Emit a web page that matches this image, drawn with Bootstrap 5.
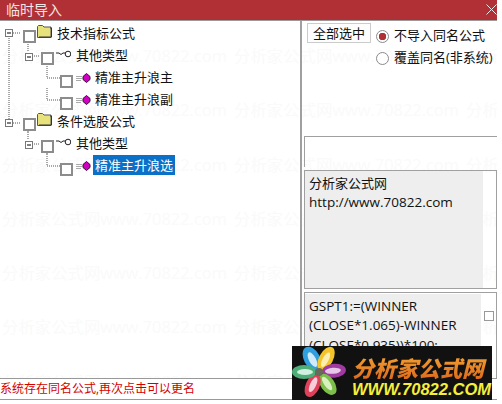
<!DOCTYPE html>
<html lang="zh-CN">
<head>
  <meta charset="UTF-8" />
  <title>临时导入</title>
  <link href="https://cdn.jsdelivr.net/npm/bootstrap@5.3.0/dist/css/bootstrap.min.css" rel="stylesheet"/>
  <style>
    body {
      background: #fff;
      color: #111;
      font-family: "Open Sans", "Noto Sans CJK SC", sans-serif;
      font-size: 13px;
      overflow: hidden;
    }
    .app-win { position: relative; width: 497px; height: 400px; }
    .title-bar {
      height: 21px;
      background: #b13035;
      border-bottom: 1px solid #999;
      color: #f4e6e6;
      font-size: 14px;
      line-height: 19px;
      padding-left: 6px;
    }
    .watermark {
      position: absolute;
      top: 29px; left: 2px; right: 0; bottom: 0;
      overflow: hidden;
      color: #fafafa;
      font-size: 16.4px;
      line-height: 54.3px;
      white-space: nowrap;
      word-spacing: 3px;
    }
    .main-area { position: relative; height: 357px; }
    .tree-pane { width: 302px; border-right: 2px solid #a0a0a0; padding-top: 1px; }
    .tree-row { height: 22px; }
    .tree-lines { flex: none; display: block; }
    .tree-lines path { fill: none; stroke: #555; stroke-dasharray: 1 1; }
    .tree-label { line-height: 20px; padding: 0 2px; margin-left: -2px; margin-top: 1px; height: 20px; }
    .tree-label.is-selected { background: #0a70c8; color: #fff; }
    .side-pane { width: 195px; }
    .side-top { height: 115px; padding: 2px 0 0 5px; }
    .all-btn {
      width: 64px; height: 20px; padding: 0;
      font-size: 13px; line-height: 18px;
      border: 1px solid #ccc; border-radius: 0;
      background: #fdfdfd; color: #111;
    }
    .radio-col { padding: 2px 0 0 5px; }
    .radio-row { min-height: 0; height: 22px; padding: 0; margin: 0; gap: 5px; white-space: nowrap; }
    .radio-row .form-check-input {
      float: none; margin: 0; width: 13px; height: 13px;
      border: 1px solid #8a8a8a; box-shadow: none;
    }
    .radio-row .form-check-input:checked {
      background-color: #fff;
      background-image: radial-gradient(circle, #b13035 0 3.5px, transparent 4px);
      border-color: #8a8a8a;
    }
    .radio-row .form-check-label { opacity: 1; }
    .name-box { height: 31px; margin: 0 0 3px 2px; border-top: 1px solid #a0a0a0; border-left: 1px solid #a0a0a0; }
    .text-box {
      margin-left: 2px;
      border: 1px solid #a0a0a0;
      line-height: 19.4px;
    }
    .desc-box { height: 119px; margin-bottom: 3px; }
    .code-box { flex-grow: 1; border-bottom: 0; }
    .text-fill { background: #eee; padding: 3px 0 0 4px; font-size: 13.5px; }
    .cn-line { font-size: 13px; }
    .desc-box .text-fill { width: 178px; }
    .code-box .text-fill { width: 176px; margin-top: 1px; overflow: hidden; }
    .line-check { width: 10px; height: 10px; border: 1px solid #999; margin: 18px 0 0 3px; flex: none; }
    .status-bar {
      height: 22px;
      border-top: 1px solid #999;
      border-bottom: 1px solid #999;
      color: #d40000;
      font-size: 12px;
      line-height: 20px;
      white-space: nowrap;
      background: #fff;
      position: relative;
    }
    .logo-block {
      position: absolute;
      left: 292px; top: 346px;
      width: 200px; height: 55px;
      background: #111;
      padding-left: 60px;
      overflow: hidden;
    }
    .logo-flower { position: absolute; left: 0; top: 0; }
    .logo-name {
      font-family: "Noto Sans CJK SC", sans-serif;
      font-size: 22px;
      font-weight: 900;
      font-style: italic;
      line-height: 30px;
      margin-top: 6px;
      white-space: nowrap;
      background: linear-gradient(#f7a834, #d9651c);
      -webkit-background-clip: text;
      background-clip: text;
      color: transparent;
    }
    .logo-url {
      font-family: "Liberation Sans", sans-serif;
      font-size: 16.5px;
      font-weight: 700;
      font-style: italic;
      line-height: 14px;
      color: #f7ee3a;
      white-space: nowrap;
    }
  </style>
</head>
<body>
  <svg width="0" height="0" class="position-absolute">
    <defs>
      <symbol id="chk" viewBox="0 0 13 13"><rect x="1" y="1" width="11" height="11" fill="#fff" stroke="#8c8c8c" stroke-width="2"/></symbol>
      <symbol id="exp" viewBox="0 0 8 8"><rect x=".5" y=".5" width="7" height="7" fill="#fff" stroke="#777"/><path d="M2 4h4" stroke="#000"/></symbol>
      <symbol id="fld" viewBox="0 0 15 13">
        <path d="M.5 12.500V1.500l1-1h4l1.500 1.500h7v10.500z" fill="#e8e27c" stroke="#555"/>
        <path d="M13 3h1.500v9H2" fill="none" stroke="#333"/>
      </symbol>
      <symbol id="key" viewBox="0 0 15 8">
        <path d="M0 3h3l2 1.500L7 3h3" fill="none" stroke="#222"/>
        <circle cx="12" cy="4" r="2.800" fill="#fff" stroke="#222"/>
      </symbol>
      <symbol id="gem" viewBox="0 0 15 10">
        <path d="M0 3.500h6M0 5.500h6M0 7.500h5" stroke="#aaa" fill="none"/>
        <path d="M10.500 .5l3.500 3v3l-3.500 3-3.500-3v-3z" fill="#d000c0" stroke="#301030"/>
      </symbol>
    </defs>
  </svg>

  <div class="app-win">
    <div class="watermark">
      <div>分析家公式网www.70822.com 分析家公式网www.70822.com 分析家公式网</div>
      <div>分析家公式网www.70822.com 分析家公式网www.70822.com 分析家公式网</div>
      <div>分析家公式网www.70822.com 分析家公式网www.70822.com 分析家公式网</div>
      <div>分析家公式网www.70822.com 分析家公式网www.70822.com 分析家公式网</div>
      <div>分析家公式网www.70822.com 分析家公式网www.70822.com 分析家公式网</div>
      <div>分析家公式网www.70822.com 分析家公式网www.70822.com 分析家公式网</div>
      <div>分析家公式网www.70822.com 分析家公式网www.70822.com 分析家公式网</div>
    </div>

    <div class="title-bar d-flex justify-content-between position-relative">
      <span>临时导入</span>
      <svg width="11" height="11" class="mt-1 me-0" viewBox="0 0 11 11"><path d="M.5.5l10 10M10.500.5l-10 10" stroke="#f4e6e6" fill="none"/></svg>
    </div>

    <div class="main-area d-flex">
      <div class="tree-pane">
        <div class="tree-row d-flex">
          <svg class="tree-lines" width="57" height="22">
            <path d="M9 14V22M13 11H20"/>
            <use href="#exp" x="5" y="7" width="8" height="8"/>
            <use href="#chk" x="23" y="8" width="13" height="13"/>
            <use href="#fld" x="37" y="3" width="15" height="13"/>
          </svg>
          <span class="tree-label">技术指标公式</span>
        </div>
        <div class="tree-row d-flex">
          <svg class="tree-lines" width="76" height="22">
            <path d="M9 0V22M28 0V8M32 12H40"/>
            <use href="#exp" x="25" y="9" width="8" height="8"/>
            <use href="#chk" x="41" y="8" width="13" height="13"/>
            <use href="#key" x="56" y="6" width="15" height="8"/>
          </svg>
          <span class="tree-label">其他类型</span>
        </div>
        <div class="tree-row d-flex">
          <svg class="tree-lines" width="95" height="22">
            <path d="M9 0V22M47 0V12H60"/>
            <use href="#chk" x="60" y="9" width="13" height="13"/>
            <use href="#gem" x="76" y="7" width="15" height="10"/>
          </svg>
          <span class="tree-label">精准主升浪主</span>
        </div>
        <div class="tree-row d-flex">
          <svg class="tree-lines" width="95" height="22">
            <path d="M9 0V22M47 0V12H60"/>
            <use href="#chk" x="60" y="9" width="13" height="13"/>
            <use href="#gem" x="76" y="7" width="15" height="10"/>
          </svg>
          <span class="tree-label">精准主升浪副</span>
        </div>
        <div class="tree-row d-flex">
          <svg class="tree-lines" width="57" height="22">
            <path d="M9 0V9M13 13H20M28 21V22"/>
            <use href="#exp" x="5" y="9" width="8" height="8"/>
            <use href="#chk" x="23" y="8" width="13" height="13"/>
            <use href="#fld" x="37" y="3" width="15" height="13"/>
          </svg>
          <span class="tree-label">条件选股公式</span>
        </div>
        <div class="tree-row d-flex">
          <svg class="tree-lines" width="76" height="22">
            <path d="M28 0V8M32 12H40M47 21V22"/>
            <use href="#exp" x="25" y="9" width="8" height="8"/>
            <use href="#chk" x="41" y="8" width="13" height="13"/>
            <use href="#key" x="56" y="6" width="15" height="8"/>
          </svg>
          <span class="tree-label">其他类型</span>
        </div>
        <div class="tree-row d-flex">
          <svg class="tree-lines" width="95" height="22">
            <path d="M47 0V12H60"/>
            <use href="#chk" x="60" y="9" width="13" height="13"/>
            <use href="#gem" x="76" y="7" width="15" height="10"/>
          </svg>
          <span class="tree-label is-selected">精准主升浪选</span>
        </div>
      </div>

      <div class="side-pane d-flex flex-column">
        <div class="side-top d-flex">
          <button type="button" class="btn all-btn flex-none">全部选中</button>
          <div class="radio-col">
            <div class="form-check radio-row d-flex align-items-center">
              <input class="form-check-input" type="radio" name="importMode" id="modeSkip" checked>
              <label class="form-check-label" for="modeSkip">不导入同名公式</label>
            </div>
            <div class="form-check radio-row d-flex align-items-center">
              <input class="form-check-input" type="radio" name="importMode" id="modeOver">
              <label class="form-check-label" for="modeOver">覆盖同名(非系统)</label>
            </div>
          </div>
        </div>
        <div class="name-box"></div>
        <div class="text-box desc-box">
          <div class="text-fill h-100"><span class="cn-line">分析家公式网</span><br>http://www.70822.com</div>
        </div>
        <div class="text-box code-box d-flex">
          <div class="text-fill">GSPT1:=(WINNER<br>(CLOSE*1.065)-WINNER<br>(CLOSE*0.935))*100;<br>JJ:=</div>
          <div class="line-check"></div>
        </div>
      </div>
    </div>

    <div class="status-bar">系统存在同名公式,再次点击可以更名</div>

    <div class="logo-block">
      <svg class="logo-flower" width="60" height="55" viewBox="0 0 60 55">
        <g transform="translate(27 26)">
          <ellipse cx="0" cy="-15" rx="8" ry="13" fill="#2f9fe0" transform="rotate(-28)"/>
          <ellipse cx="0" cy="-15" rx="7" ry="13" fill="#f4c52a" transform="rotate(28)"/>
          <ellipse cx="0" cy="-15" rx="7" ry="12" fill="#a03aa0" transform="rotate(85)"/>
          <ellipse cx="0" cy="-15" rx="7" ry="12" fill="#7cc04a" transform="rotate(145)"/>
          <ellipse cx="0" cy="-15" rx="7" ry="12" fill="#e0405a" transform="rotate(205)"/>
          <ellipse cx="0" cy="-15" rx="7" ry="12" fill="#4fae78" transform="rotate(270)"/>
          <ellipse cx="0" cy="-14" rx="3.500" ry="8" fill="#cfeaf8" transform="rotate(-28)"/>
          <ellipse cx="0" cy="-14" rx="3" ry="8" fill="#fbeeb0" transform="rotate(28)"/>
          <ellipse cx="0" cy="-14" rx="3" ry="8" fill="#e8c8e8" transform="rotate(85)"/>
          <ellipse cx="0" cy="-14" rx="3" ry="8" fill="#d8efc0" transform="rotate(145)"/>
          <ellipse cx="0" cy="-14" rx="3" ry="8" fill="#f8cfd8" transform="rotate(205)"/>
          <ellipse cx="0" cy="-14" rx="3" ry="8" fill="#d0f0e0" transform="rotate(270)"/>
          <circle r="4" fill="#6a6a5a"/>
        </g>
      </svg>
      <div class="logo-name">分析家公式网</div>
      <div class="logo-url">WWW.70822.COM</div>
    </div>
  </div>

  <script src="https://cdn.jsdelivr.net/npm/bootstrap@5.3.0/dist/js/bootstrap.bundle.min.js"></script>
</body>
</html>
